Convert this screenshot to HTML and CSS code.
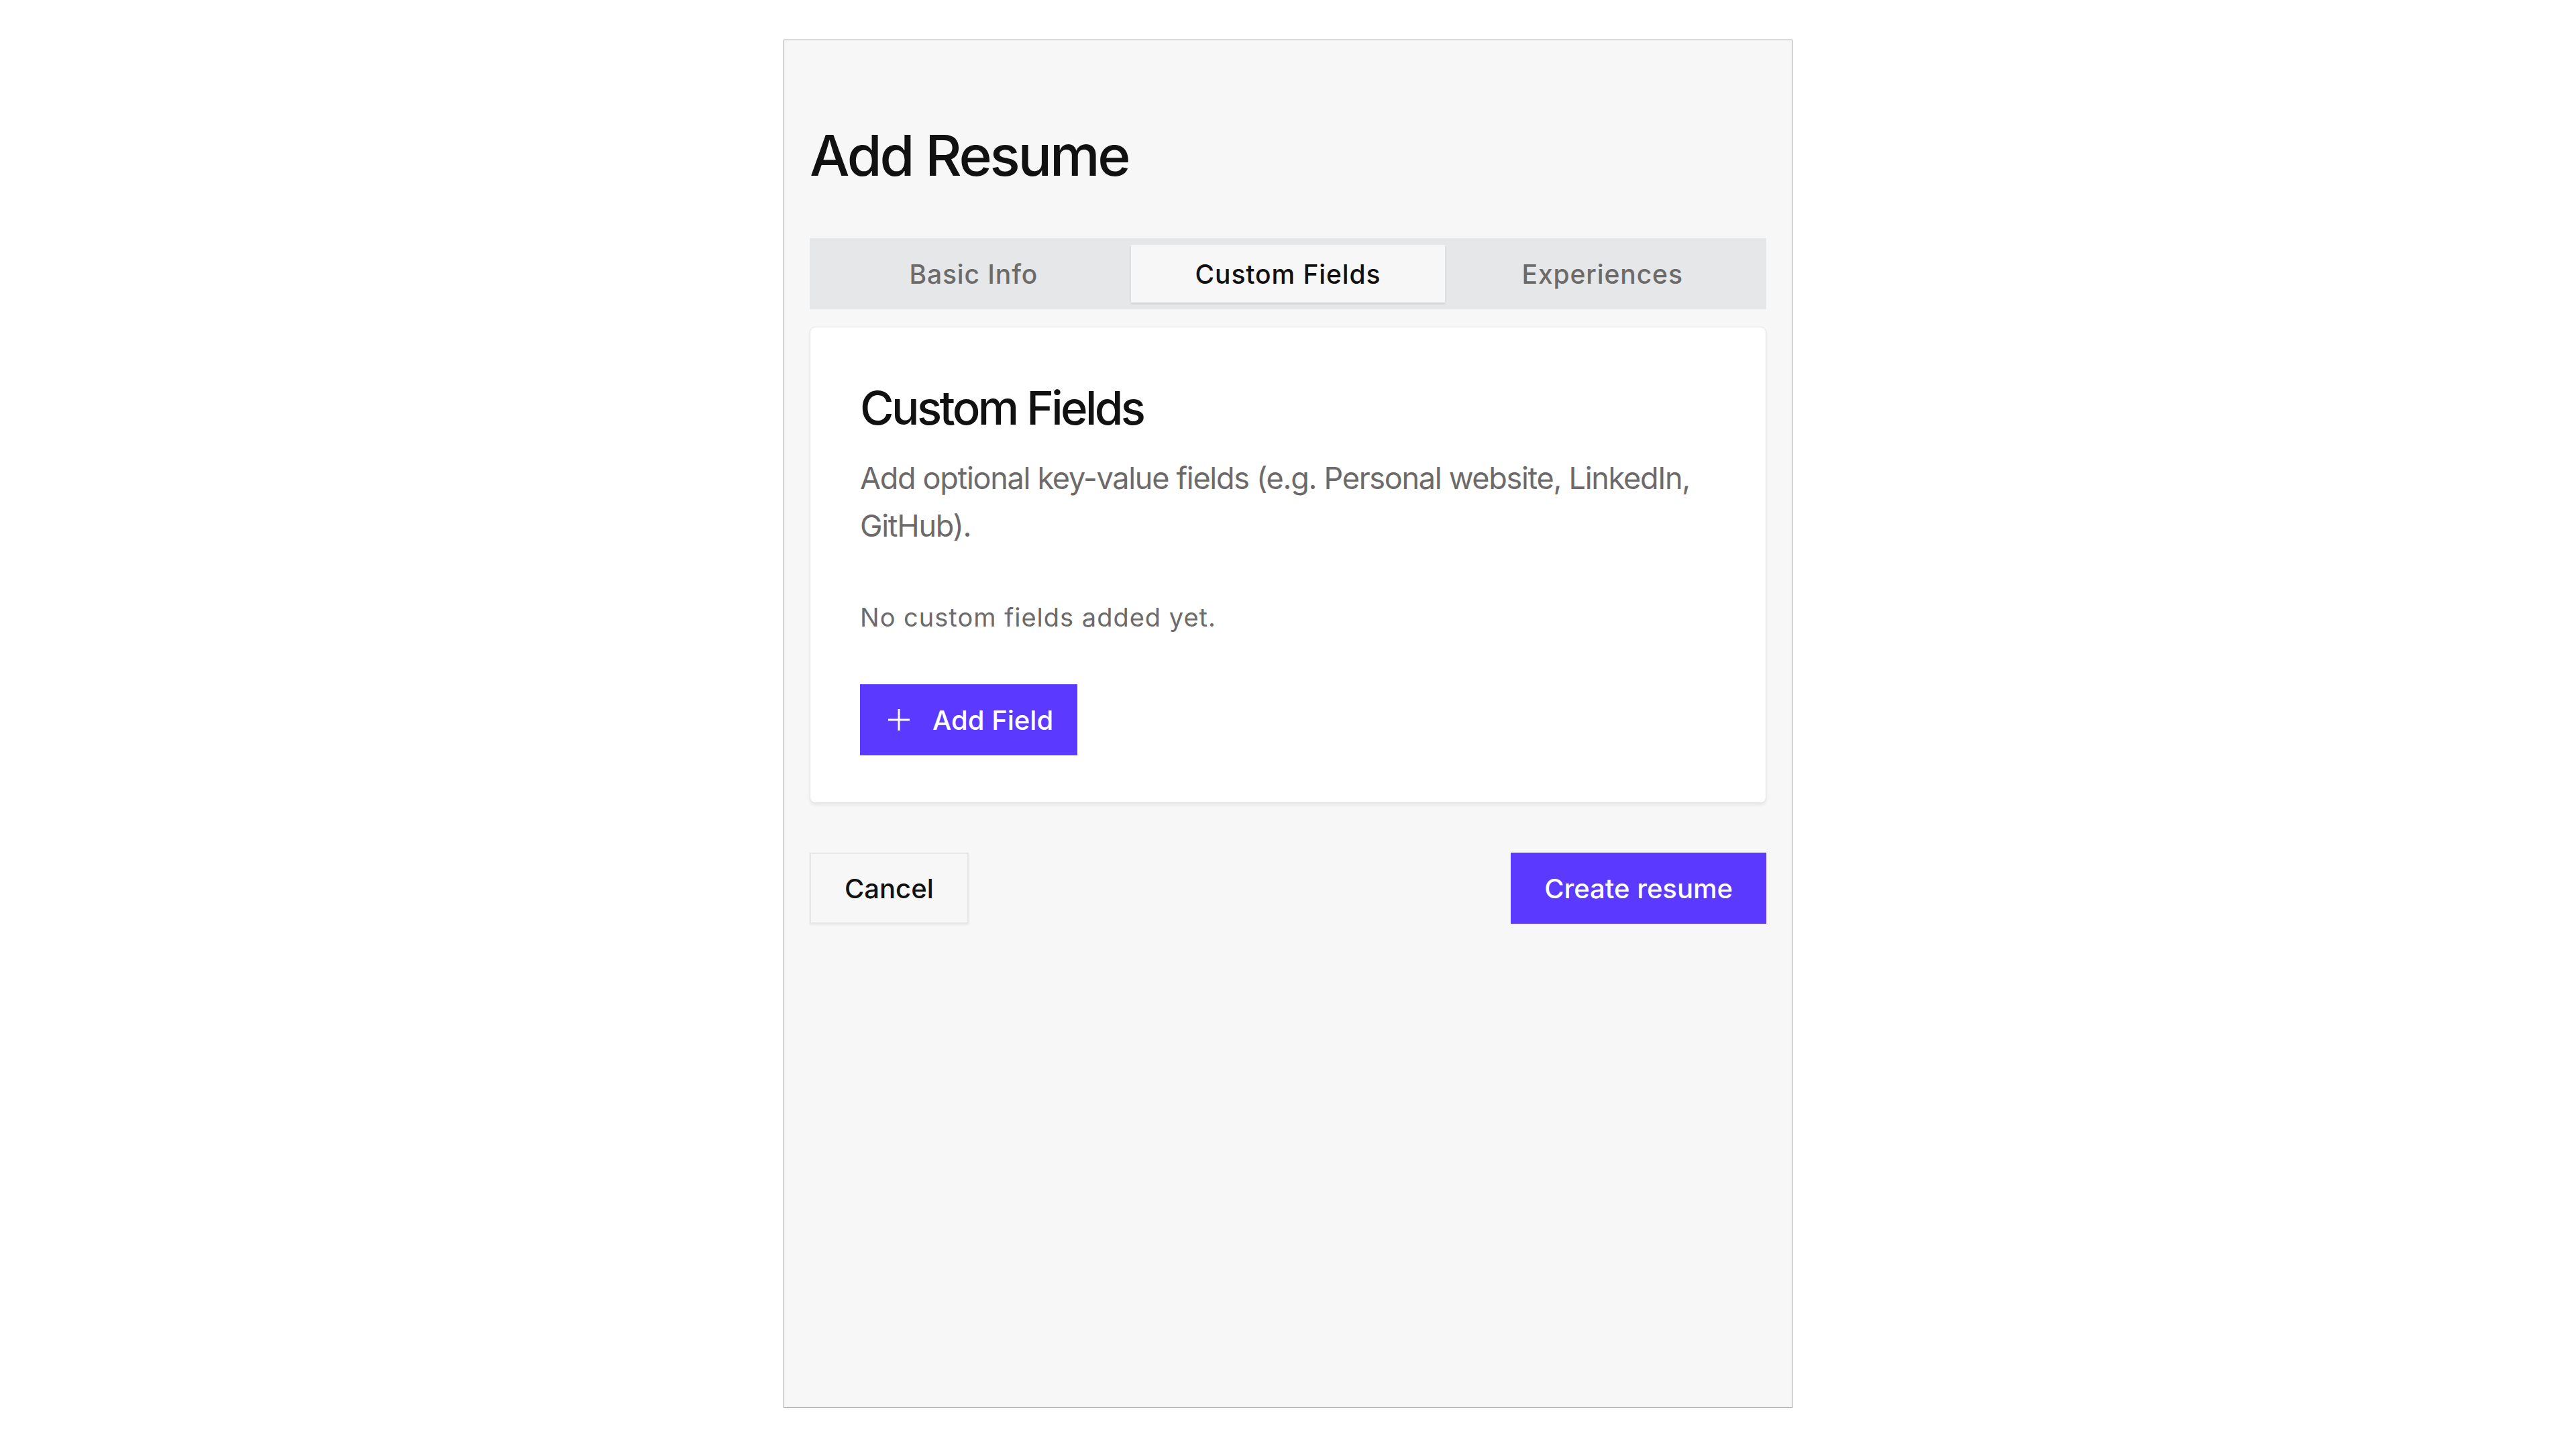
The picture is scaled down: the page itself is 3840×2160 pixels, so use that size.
FILE: index.html
```html
<!DOCTYPE html>
<html lang="en">
<head>
<meta charset="utf-8">
<title>Add Resume</title>
<link rel="stylesheet" href="styles.css">
</head>
<body>
<main class="panel">
  <h1 class="page-title">Add Resume</h1>
  <nav class="tabs">
    <div class="tab">Basic Info</div>
    <div class="tab tab-active">Custom Fields</div>
    <div class="tab">Experiences</div>
  </nav>
  <section class="card">
    <h2 class="card-title">Custom Fields</h2>
    <p class="card-desc">Add optional key-value fields (e.g. Personal website, LinkedIn, GitHub).</p>
    <p class="empty-note">No custom fields added yet.</p>
    <button class="btn btn-primary btn-add" type="button">
      <svg class="plus-icon" width="32" height="32" viewBox="0 0 32 32" aria-hidden="true"><path d="M16 0v32M0 16h32" fill="none" stroke="#ffffff" stroke-width="3"/></svg>
      <span>Add Field</span>
    </button>
  </section>
  <div class="actions">
    <button class="btn btn-secondary" type="button">Cancel</button>
    <button class="btn btn-primary" type="button">Create resume</button>
  </div>
</main>
</body>
</html>
```
FILE: styles.css
```css
html, body {
  margin: 0;
  padding: 0;
  background: #ffffff;
}

body {
  font-family: Inter, "Noto Sans", "Liberation Sans", sans-serif;
  color: #111111;
}

.panel {
  box-sizing: border-box;
  width: 1504px;
  height: 2040px;
  margin: 59px auto 0;
  padding: 130px 38px 38px;
  background: #f7f7f7;
  border: 1px solid #9c9c9c;
}

.page-title {
  margin: 0 0 81px;
  font-size: 84px;
  line-height: 84px;
  font-weight: 500;
  letter-spacing: -3.2px;
  color: #111111;
}

.tabs {
  display: grid;
  grid-template-columns: 1fr 1fr 1fr;
  padding: 10px;
  height: 106px;
  box-sizing: border-box;
  background: #e6e7e9;
}

.tab {
  display: flex;
  align-items: center;
  justify-content: center;
  font-size: 39px;
  font-weight: 500;
  letter-spacing: 0.9px;
  color: #6d6a6a;
}

.tab-active {
  background: #f7f7f7;
  color: #111111;
  box-shadow: 0 2px 3px rgba(0, 0, 0, 0.12);
}

.card {
  margin-top: 26px;
  padding: 74px 74px 70px;
  background: #ffffff;
  border: 1px solid #e4e4e6;
  border-radius: 8px;
  box-shadow: 0 3px 5px rgba(0, 0, 0, 0.07);
}

.card-title {
  margin: 0;
  font-size: 69px;
  line-height: 93px;
  font-weight: 500;
  letter-spacing: -3.6px;
  color: #111111;
}

.card-desc {
  margin: 22px 0 0;
  font-size: 45px;
  line-height: 71px;
  letter-spacing: -1.3px;
  color: #6d6a6a;
}

.empty-note {
  margin: 73px 0 0;
  font-size: 38px;
  line-height: 57px;
  letter-spacing: 1px;
  color: #6d6a6a;
}

.btn {
  display: inline-flex;
  align-items: center;
  justify-content: center;
  box-sizing: border-box;
  height: 106px;
  padding: 0 50px;
  border: none;
  border-radius: 0;
  font-family: inherit;
  font-size: 40px;
  font-weight: 500;
}

.btn-primary {
  background: #5b39fe;
  color: #ffffff;
}

.btn-secondary {
  background: #f7f7f7;
  color: #111111;
  border: 2px solid #e7e7e7;
  box-shadow: 0 2px 3px rgba(0, 0, 0, 0.06);
}

.btn-add {
  margin-top: 71px;
  padding: 0 36px 0 42px;
  gap: 34px;
}

.plus-icon {
  display: block;
}

.actions {
  display: flex;
  justify-content: space-between;
  margin-top: 74px;
}
```
